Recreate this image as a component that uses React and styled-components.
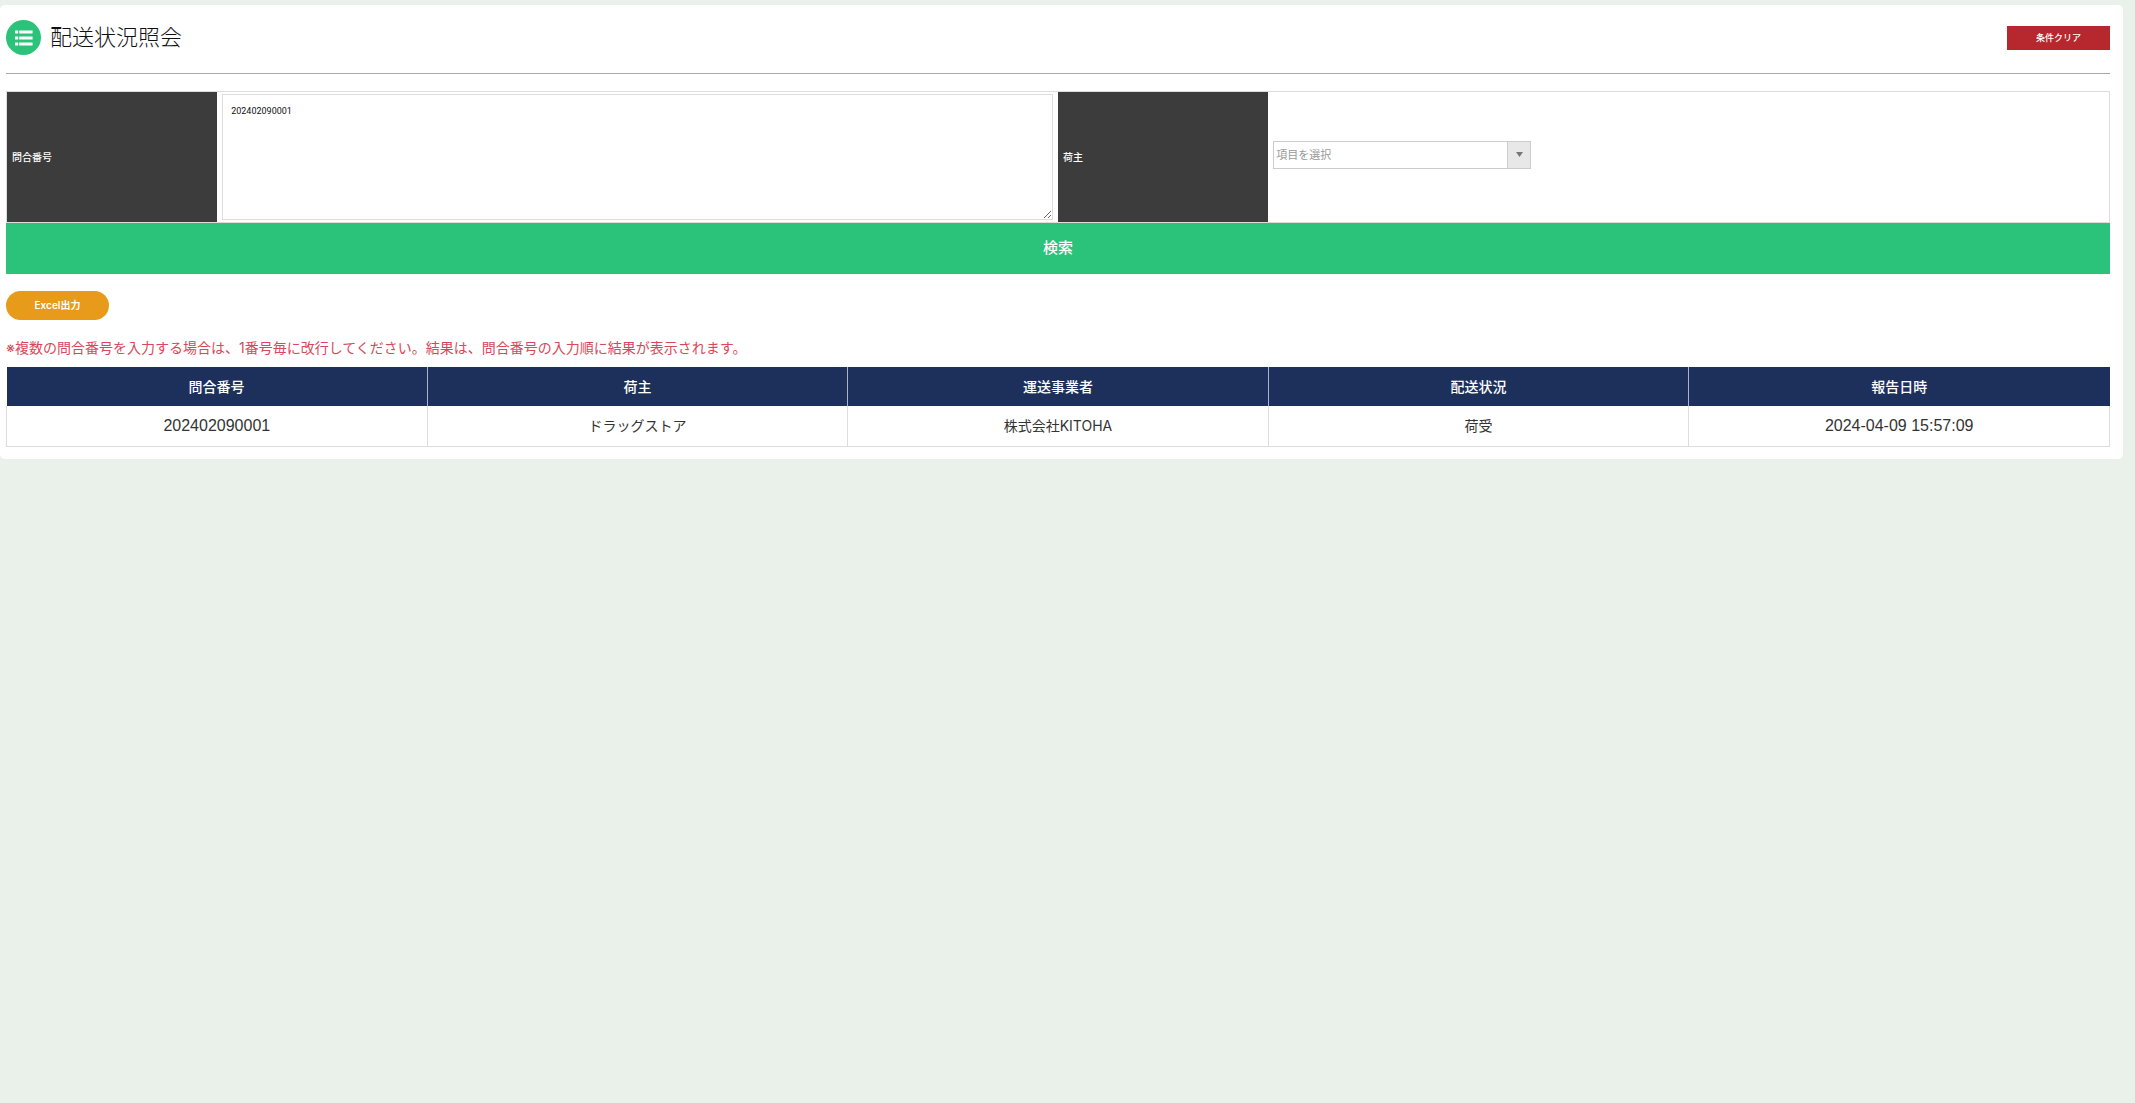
import React, { useState } from "react";

import styled, { createGlobalStyle } from "styled-components";

const GlobalStyle = createGlobalStyle`
  * {
    box-sizing: border-box;
  }

  body {
    margin: 0;
    background: #eaf1ea;
    color: #333;
    font-family: Inter, "Noto Sans CJK JP", sans-serif;
    font-size: 14px;
    font-weight: 400;
  }

  button, select, textarea {
    font-family: inherit;
  }
`;

const Panel = styled.main`
  margin: 5px 12px 0 0;
  padding: 0 13px 12px 6px;
  background: #fff;
  border-radius: 5px;
`;

const Header = styled.header`
  display: flex;
  align-items: center;
  height: 69px;
  margin-bottom: 17px;
  padding-bottom: 3px;
  border-bottom: 1px solid #aaa;
`;

const IconCircle = styled.span`
  display: flex;
  align-items: center;
  justify-content: center;
  width: 35px;
  height: 35px;
  border-radius: 50%;
  background: #2bc37a;
`;

const Title = styled.h1`
  flex: 1;
  margin: 0 0 0 9px;
  padding-bottom: 6px;
  color: #111;
  font-family: "Noto Sans CJK JP", sans-serif;
  font-size: 22px;
  font-weight: 300;
  line-height: 32px;
`;

const ClearButton = styled.button`
  width: 103px;
  height: 24px;
  padding: 0;
  border: none;
  background: #b7282e;
  color: #fff;
  font-size: 9px;
  font-weight: 500;
`;

const Fields = styled.div`
  display: grid;
  grid-template-columns: 1fr 4fr 1fr 4fr;
  border: 1px solid #ddd;
`;

const FieldLabel = styled.label`
  display: flex;
  align-items: center;
  padding: 0 5px 2px;
  background: #3c3c3c;
  color: #fff;
  font-size: 10px;
  font-weight: 500;
`;

const FieldBody = styled.div`
  display: flex;
  align-items: center;
  padding: ${props => (props.$raised ? "0 5px 4px" : "2px 5px")};
`;

const NumberArea = styled.textarea`
  display: block;
  width: 100%;
  height: 126px;
  padding: 9px 8px;
  border: 1px solid #ddd;
  background: #fff;
  color: #111;
  font-family: Roboto, "Noto Sans CJK JP", sans-serif;
  font-size: 9px;
  line-height: 14px;
`;

const SelectBox = styled.div`
  display: flex;
  width: 258px;
  height: 28px;
  position: relative;
  border: 1px solid #ccc;
`;

const OwnerSelect = styled.select`
  width: 100%;
  padding: 0 26px 0 2px;
  appearance: none;
  border: none;
  border-radius: 0;
  background: #fff;
  color: #999;
  font-size: 11px;
`;

const SelectArrow = styled.span`
  display: flex;
  align-items: center;
  justify-content: center;
  position: absolute;
  top: 0;
  right: 0;
  bottom: 0;
  width: 23px;
  padding-bottom: 2px;
  border-left: 1px solid #ccc;
  background: #e8e8e8;
  pointer-events: none;
`;

const SearchButton = styled.button`
  display: block;
  width: 100%;
  height: 51px;
  padding: 0 0 4px;
  border: none;
  background: #2bc37a;
  color: #fff;
  font-size: 15px;
  font-weight: 500;
`;

const ExcelButton = styled.button`
  display: block;
  width: 103px;
  height: 29px;
  margin: 17px 0 18px;
  padding: 0 0 2px;
  border: none;
  border-radius: 15px;
  background: #e89a1b;
  color: #fff;
  font-size: 10px;
  font-weight: 600;
`;

const Notice = styled.p`
  margin: 0 0 9px;
  color: #d9475a;
  line-height: 20px;
`;

const ResultTable = styled.table`
  width: 100%;
  table-layout: fixed;
  border-collapse: collapse;
  text-align: center;
`;

const HeadCell = styled.th`
  height: 39px;
  padding: 0 0 2px;
  border-right: 1px solid #aab2c6;
  background: #1d305c;
  color: #fff;
  font-weight: 500;

  &:last-child {
    border-right-color: #1d305c;
  }
`;

const Cell = styled.td`
  height: 40px;
  padding: ${props => (props.$numeric ? "0" : "0 0 2px")};
  border: 1px solid #ddd;
  border-top: none;
  ${props =>
    props.$numeric && 'font-family: "Liberation Sans", sans-serif; font-size: 16px;'}
`;

const columns = ["問合番号", "荷主", "運送事業者", "配送状況", "報告日時"];

const rows = [
  ["202402090001", "ドラッグストア", "株式会社KITOHA", "荷受", "2024-04-09 15:57:09"]
];

const isNumeric = value => /^[\d\s:-]+$/.test(value);

const ListIcon = () => (
  <svg width="18" height="16" viewBox="0 0 18 16" fill="#fff" aria-hidden="true">
    <rect x="0" y="0.4" width="3.2" height="3" rx="0.3" />
    <rect x="4.2" y="0.4" width="13.4" height="3" rx="0.3" />
    <rect x="0" y="6.5" width="3.2" height="3" rx="0.3" />
    <rect x="4.2" y="6.5" width="13.4" height="3" rx="0.3" />
    <rect x="0" y="12.6" width="3.2" height="3" rx="0.3" />
    <rect x="4.2" y="12.6" width="13.4" height="3" rx="0.3" />
  </svg>
);

const App = () => {
  const [numbers, setNumbers] = useState("202402090001");
  const [owner, setOwner] = useState("");

  const clearHandler = () => {
    setNumbers("");
    setOwner("");
  };

  return (
    <>
      <GlobalStyle />
      <Panel>
        <Header>
          <IconCircle>
            <ListIcon />
          </IconCircle>
          <Title>配送状況照会</Title>
          <ClearButton type="button" onClick={clearHandler}>
            条件クリア
          </ClearButton>
        </Header>
        <form onSubmit={e => e.preventDefault()}>
          <Fields>
            <FieldLabel htmlFor="numbers">問合番号</FieldLabel>
            <FieldBody>
              <NumberArea
                id="numbers"
                name="numbers"
                value={numbers}
                onChange={e => setNumbers(e.target.value)}
              />
            </FieldBody>
            <FieldLabel htmlFor="owner">荷主</FieldLabel>
            <FieldBody $raised>
              <SelectBox>
                <OwnerSelect
                  id="owner"
                  name="owner"
                  value={owner}
                  onChange={e => setOwner(e.target.value)}
                >
                  <option value="">項目を選択</option>
                  <option value="drugstore">ドラッグストア</option>
                </OwnerSelect>
                <SelectArrow>
                  <svg width="7" height="5" viewBox="0 0 7 5" fill="#777" aria-hidden="true">
                    <path d="M0 0h7L3.5 5z" />
                  </svg>
                </SelectArrow>
              </SelectBox>
            </FieldBody>
          </Fields>
          <SearchButton type="submit">検索</SearchButton>
        </form>
        <ExcelButton type="button">Excel出力</ExcelButton>
        <Notice>
          ※複数の問合番号を入力する場合は、1番号毎に改行してください。結果は、問合番号の入力順に結果が表示されます。
        </Notice>
        <ResultTable>
          <thead>
            <tr>
              {columns.map(name => (
                <HeadCell key={name} scope="col">
                  {name}
                </HeadCell>
              ))}
            </tr>
          </thead>
          <tbody>
            {rows.map(row => (
              <tr key={row[0]}>
                {row.map(value => (
                  <Cell key={value} $numeric={isNumeric(value)}>
                    {value}
                  </Cell>
                ))}
              </tr>
            ))}
          </tbody>
        </ResultTable>
      </Panel>
    </>
  );
};

export default App;
